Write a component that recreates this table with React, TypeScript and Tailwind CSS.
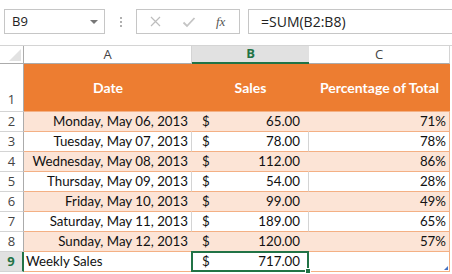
import React from "react";

const rows = [
  { date: "Monday, May 06, 2013", sales: "65.00", pct: "71%" },
  { date: "Tuesday, May 07, 2013", sales: "78.00", pct: "78%" },
  { date: "Wednesday, May 08, 2013", sales: "112.00", pct: "86%" },
  { date: "Thursday, May 09, 2013", sales: "54.00", pct: "28%" },
  { date: "Friday, May 10, 2013", sales: "99.00", pct: "49%" },
  { date: "Saturday, May 11, 2013", sales: "189.00", pct: "65%" },
  { date: "Sunday, May 12, 2013", sales: "120.00", pct: "57%" },
];

const App: React.FC = () => {
  return (
    <div className="w-[452px] h-[274px] bg-white overflow-hidden text-[#111] font-['Lato',sans-serif] whitespace-nowrap">
      {/* Formula bar */}
      <div className="h-[45px] flex items-start pt-[9px] pl-[4px] font-['Open_Sans',sans-serif] text-[13px]">
        <div className="w-[101px] h-[25px] border border-[#c6c6c6] flex items-center justify-between pl-[7px] pr-[6px] text-[#222]">
          <span>B9</span>
          <span className="w-0 h-0 border-l-[4px] border-r-[4px] border-t-[4px] border-l-transparent border-r-transparent border-t-[#777]" />
        </div>
        <div className="w-[31px] h-[25px] flex flex-col items-center justify-center gap-[2px]">
          <span className="w-[2px] h-[2px] bg-[#b0b0b0]" />
          <span className="w-[2px] h-[2px] bg-[#b0b0b0]" />
          <span className="w-[2px] h-[2px] bg-[#b0b0b0]" />
        </div>
        <div className="w-[104px] h-[25px] border border-[#c6c6c6] flex items-center pl-[12px] gap-[20px] text-[#bdbdbd]">
          <svg width="13" height="13" viewBox="0 0 13 13">
            <path d="M2 2 L11 11 M11 2 L2 11" stroke="#bdbdbd" strokeWidth="1.2" fill="none" />
          </svg>
          <svg width="14" height="12" viewBox="0 0 14 12">
            <path d="M1.5 6.5 L5 10 L12.5 2" stroke="#c4c4c4" strokeWidth="1.8" fill="none" />
          </svg>
          <span className="font-['Liberation_Serif',serif] italic text-[#555] text-[13px]">fx</span>
        </div>
        <div className="ml-[8px] flex-1 h-[25px] border border-[#c6c6c6] border-r-0 flex items-center pl-[12px] text-[14px] text-[#222]">
          =SUM(B2:B8)
        </div>
      </div>

      {/* Column headers */}
      <div className="flex h-[19px] border-t border-[#d4d4d4] font-['Open_Sans',sans-serif] text-[13px] text-[#444]">
        <div className="w-[24px] border-r border-b border-[#ababab] flex items-end justify-end pr-[2px] pb-[2px]">
          <svg width="12" height="12" viewBox="0 0 12 12">
            <path d="M12 0 L12 12 L0 12 Z" fill="#e2e2e2" />
          </svg>
        </div>
        <div className="w-[168px] border-r border-b border-r-[#d4d4d4] border-b-[#ababab] flex items-center justify-center">A</div>
        <div className="w-[117px] bg-[#e1e1e1] border-b-2 border-[#217346] flex items-center justify-center font-bold text-[#217346]">B</div>
        <div className="w-[141px] border-r border-b border-r-[#d4d4d4] border-b-[#ababab] flex items-center justify-center">C</div>
      </div>

      {/* Row 1 - table header */}
      <div className="flex h-[48px]">
        <div className="w-[24px] border-r border-b border-r-[#ababab] border-b-[#d4d4d4] flex items-end justify-center pb-[2px] font-['Open_Sans',sans-serif] text-[13px] text-[#444]">1</div>
        <div className="w-[426px] bg-[#ed7d31] border-b border-[#f4b084] flex items-center text-white font-bold text-[14px]">
          <div className="w-[168px] text-center">Date</div>
          <div className="w-[117px] text-center">Sales</div>
          <div className="w-[141px] text-center">Percentage of Total</div>
        </div>
      </div>

      {/* Data rows */}
      {rows.map((r, i) => {
        const shaded = i % 2 === 0;
        const bg = shaded ? "bg-[#fce4d6]" : "bg-white";
        const vline = shaded ? "border-r-[#fce4d6]" : "border-r-[#d4d4d4]";
        return (
          <div key={i} className="flex h-[20px] text-[13.3px]">
            <div className="w-[24px] border-r border-b border-r-[#ababab] border-b-[#d4d4d4] flex items-center justify-center font-['Open_Sans',sans-serif] text-[13px] text-[#444]">
              {i + 2}
            </div>
            <div className={`w-[168px] ${bg} border-r border-b ${vline} border-b-[#f4b084] flex items-center justify-end pr-[3px]`}>
              {r.date}
            </div>
            <div className={`w-[117px] ${bg} border-r border-b ${vline} border-b-[#f4b084] flex items-center justify-between pl-[10px] pr-[8px]`}>
              <span>$</span>
              <span>{r.sales}</span>
            </div>
            <div className={`w-[141px] ${bg} border-r border-b border-r-[#f4b084] border-b-[#f4b084] flex items-center justify-end pr-[3px]`}>
              {r.pct}
            </div>
          </div>
        );
      })}

      {/* Row 9 - total */}
      <div className="flex h-[20px] text-[13.3px]">
        <div className="w-[24px] bg-[#e1e1e1] border-r-2 border-b border-r-[#217346] border-b-[#d4d4d4] flex items-center justify-center font-['Open_Sans',sans-serif] text-[13px] font-bold text-[#217346]">
          9
        </div>
        <div className="w-[168px] border-r border-b border-r-[#d4d4d4] border-b-[#f4b084] flex items-center pl-[2px]">
          Weekly Sales
        </div>
        <div className="w-[117px] border-r border-b border-r-[#d4d4d4] border-b-[#f4b084] flex items-center justify-between pl-[10px] pr-[8px] relative">
          <span>$</span>
          <span>717.00</span>
          <span className="absolute -left-[1px] -top-[1px] -right-[1px] -bottom-[1px] border-2 border-[#217346]" />
          <span className="absolute -right-[3px] -bottom-[3px] w-[6px] h-[6px] bg-[#217346] border border-white" />
        </div>
        <div className="w-[141px] border-r border-b border-r-[#f4b084] border-b-[#f4b084] flex items-end justify-end p-[1px]">
          <svg width="4" height="4" viewBox="0 0 4 4">
            <path d="M4 0 L4 4 L0 4 Z" fill="#4472c4" />
          </svg>
        </div>
      </div>
    </div>
  );
};

export default App;
